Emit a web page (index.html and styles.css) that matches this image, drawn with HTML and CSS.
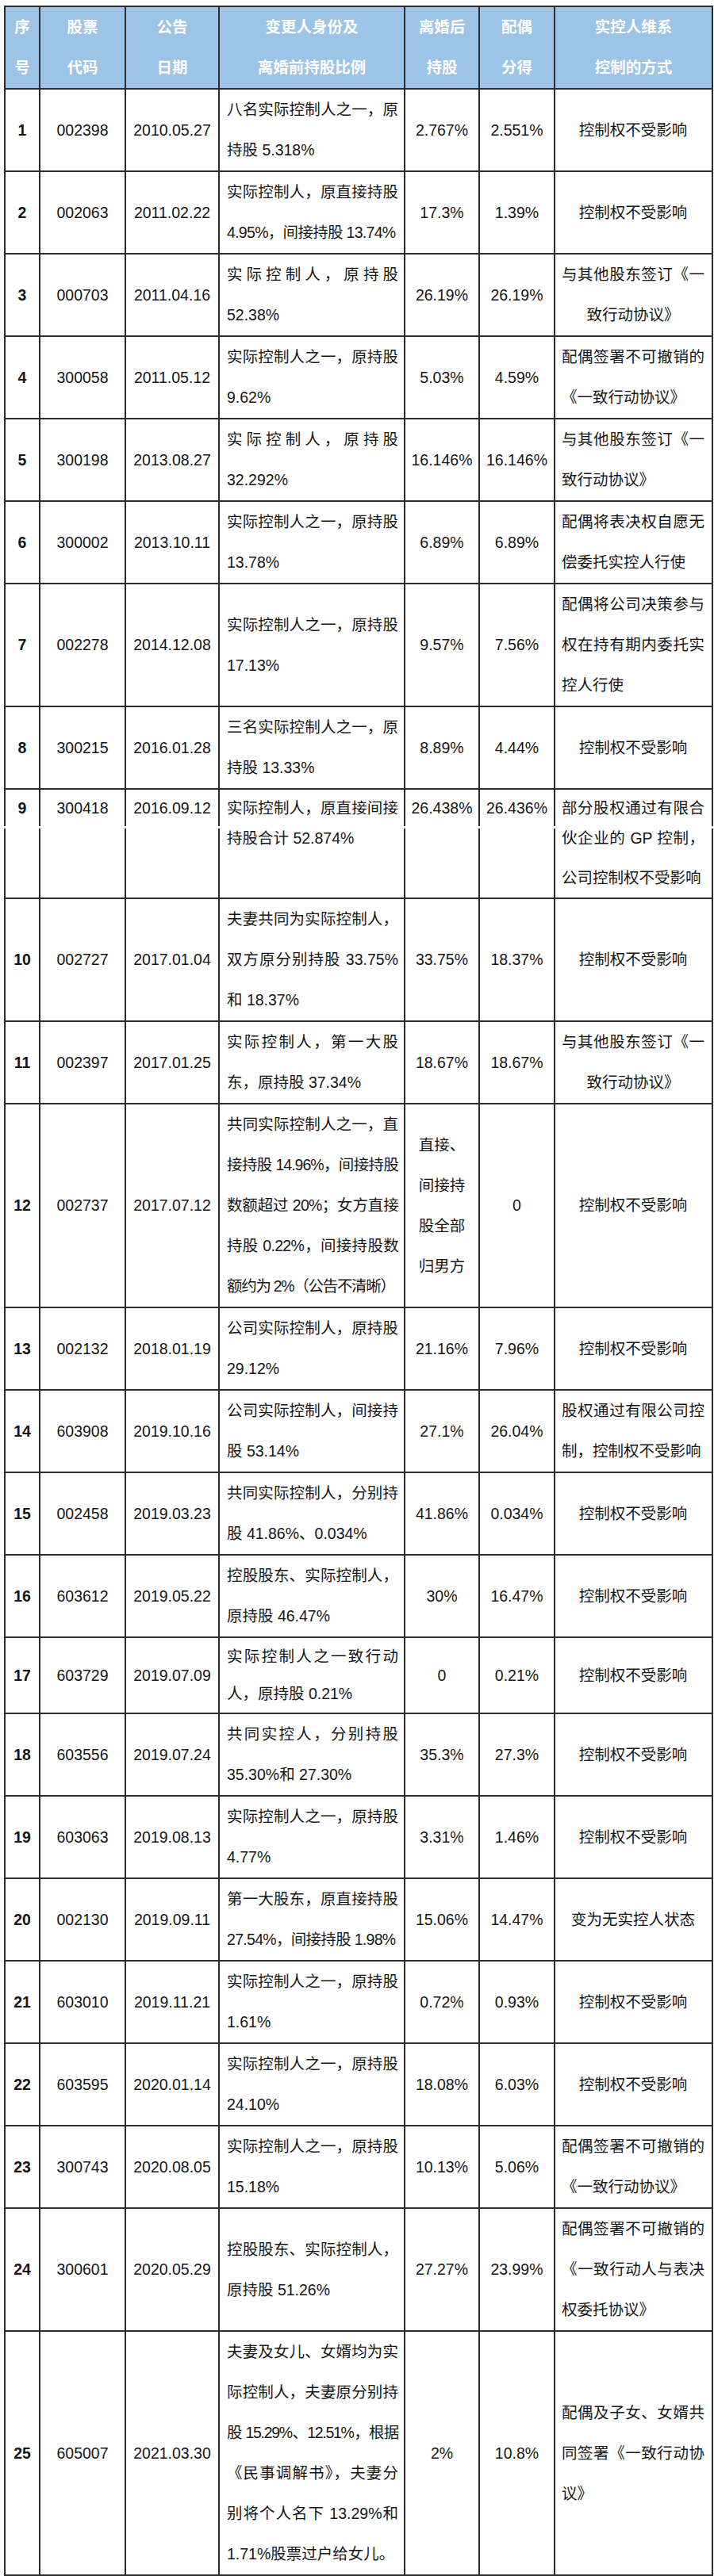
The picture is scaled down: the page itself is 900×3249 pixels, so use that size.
FILE: index.html
```html
<!DOCTYPE html>
<html lang="zh-CN">
<head>
<meta charset="utf-8">
<title>离婚案例表</title>
<link rel="stylesheet" href="styles.css">
</head>
<body>
<table class="tbl">
<colgroup>
<col class="w1"><col class="w2"><col class="w3"><col class="w4"><col class="w5"><col class="w6"><col class="w7">
</colgroup>
<thead>
<tr>
<th>序<br>号</th><th>股票<br>代码</th><th>公告<br>日期</th><th>变更人身份及<br>离婚前持股比例</th><th>离婚后<br>持股</th><th>配偶<br>分得</th><th>实控人维系<br>控制的方式</th>
</tr>
</thead>
<tbody>
<tr><td class="num">1</td><td>002398</td><td>2010.05.27</td><td class="desc"><span class="l">八名实际控制人之一，原</span>持股 5.318%</td><td class="val">2.767%</td><td class="val">2.551%</td><td class="ctl">控制权不受影响</td></tr>
<tr><td class="num">2</td><td>002063</td><td>2011.02.22</td><td class="desc"><span class="l">实际控制人，原直接持股</span><span class="e t1">4.95%，间接持股 13.74%</span></td><td class="val">17.3%</td><td class="val">1.39%</td><td class="ctl">控制权不受影响</td></tr>
<tr><td class="num">3</td><td>000703</td><td>2011.04.16</td><td class="desc"><span class="l">实际控制人，原持股</span>52.38%</td><td class="val">26.19%</td><td class="val">26.19%</td><td class="ctl"><span class="l">与其他股东签订《一</span>致行动协议》</td></tr>
<tr><td class="num">4</td><td>300058</td><td>2011.05.12</td><td class="desc"><span class="l">实际控制人之一，原持股</span>9.62%</td><td class="val">5.03%</td><td class="val">4.59%</td><td class="ctl lft"><span class="l">配偶签署不可撤销的</span>《一致行动协议》</td></tr>
<tr><td class="num">5</td><td>300198</td><td>2013.08.27</td><td class="desc"><span class="l">实际控制人，原持股</span>32.292%</td><td class="val">16.146%</td><td class="val">16.146%</td><td class="ctl lft"><span class="l">与其他股东签订《一</span>致行动协议》</td></tr>
<tr><td class="num">6</td><td>300002</td><td>2013.10.11</td><td class="desc"><span class="l">实际控制人之一，原持股</span>13.78%</td><td class="val">6.89%</td><td class="val">6.89%</td><td class="ctl lft"><span class="l">配偶将表决权自愿无</span>偿委托实控人行使</td></tr>
<tr><td class="num">7</td><td>002278</td><td>2014.12.08</td><td class="desc"><span class="l">实际控制人之一，原持股</span>17.13%</td><td class="val">9.57%</td><td class="val">7.56%</td><td class="ctl lft"><span class="l">配偶将公司决策参与</span><span class="l">权在持有期内委托实</span>控人行使</td></tr>
<tr><td class="num">8</td><td>300215</td><td>2016.01.28</td><td class="desc"><span class="l">三名实际控制人之一，原</span>持股 13.33%</td><td class="val">8.89%</td><td class="val">4.44%</td><td class="ctl">控制权不受影响</td></tr>
<tr class="r9a"><td class="num">9</td><td>300418</td><td>2016.09.12</td><td class="desc"><span class="l">实际控制人，原直接间接</span></td><td class="val">26.438%</td><td class="val">26.436%</td><td class="ctl lft"><span class="l">部分股权通过有限合</span></td></tr>
<tr class="gap"><td colspan="7"></td></tr>
<tr class="r9b"><td></td><td></td><td></td><td class="desc"><div class="up">持股合计 52.874%</div></td><td></td><td></td><td class="ctl lft"><div class="up"><span class="l">伙企业的 GP 控制，</span>公司控制权不受影响</div></td></tr>
<tr><td class="num">10</td><td>002727</td><td>2017.01.04</td><td class="desc"><span class="l">夫妻共同为实际控制人，</span><span class="l">双方原分别持股 33.75%</span>和 18.37%</td><td class="val">33.75%</td><td class="val">18.37%</td><td class="ctl">控制权不受影响</td></tr>
<tr><td class="num">11</td><td>002397</td><td>2017.01.25</td><td class="desc"><span class="l">实际控制人，第一大股</span>东，原持股 37.34%</td><td class="val">18.67%</td><td class="val">18.67%</td><td class="ctl"><span class="l">与其他股东签订《一</span>致行动协议》</td></tr>
<tr><td class="num">12</td><td>002737</td><td>2017.07.12</td><td class="desc"><span class="l">共同实际控制人之一，直</span><span class="l t2">接持股 14.96%，间接持股</span><span class="l t1">数额超过 20%；女方直接</span><span class="l t1">持股 0.22%，间接持股数</span><span class="e t3">额约为 2%（公告不清晰）</span></td><td class="val">直接、<br>间接持<br>股全部<br>归男方</td><td class="val">0</td><td class="ctl">控制权不受影响</td></tr>
<tr><td class="num">13</td><td>002132</td><td>2018.01.19</td><td class="desc"><span class="l">公司实际控制人，原持股</span>29.12%</td><td class="val">21.16%</td><td class="val">7.96%</td><td class="ctl">控制权不受影响</td></tr>
<tr><td class="num">14</td><td>603908</td><td>2019.10.16</td><td class="desc"><span class="l">公司实际控制人，间接持</span>股 53.14%</td><td class="val">27.1%</td><td class="val">26.04%</td><td class="ctl lft"><span class="l">股权通过有限公司控</span>制，控制权不受影响</td></tr>
<tr><td class="num">15</td><td>002458</td><td>2019.03.23</td><td class="desc"><span class="l">共同实际控制人，分别持</span>股 41.86%、0.034%</td><td class="val">41.86%</td><td class="val">0.034%</td><td class="ctl">控制权不受影响</td></tr>
<tr><td class="num">16</td><td>603612</td><td>2019.05.22</td><td class="desc"><span class="l">控股股东、实际控制人，</span>原持股 46.47%</td><td class="val">30%</td><td class="val">16.47%</td><td class="ctl">控制权不受影响</td></tr>
<tr class="r17"><td class="num">17</td><td>603729</td><td>2019.07.09</td><td class="desc"><span class="l">实际控制人之一致行动</span>人，原持股 0.21%</td><td class="val">0</td><td class="val">0.21%</td><td class="ctl">控制权不受影响</td></tr>
<tr><td class="num">18</td><td>603556</td><td>2019.07.24</td><td class="desc"><span class="l">共同实控人，分别持股</span>35.30%和 27.30%</td><td class="val">35.3%</td><td class="val">27.3%</td><td class="ctl">控制权不受影响</td></tr>
<tr><td class="num">19</td><td>603063</td><td>2019.08.13</td><td class="desc"><span class="l">实际控制人之一，原持股</span>4.77%</td><td class="val">3.31%</td><td class="val">1.46%</td><td class="ctl">控制权不受影响</td></tr>
<tr><td class="num">20</td><td>002130</td><td>2019.09.11</td><td class="desc"><span class="l">第一大股东，原直接持股</span><span class="e t1">27.54%，间接持股 1.98%</span></td><td class="val">15.06%</td><td class="val">14.47%</td><td class="ctl">变为无实控人状态</td></tr>
<tr><td class="num">21</td><td>603010</td><td>2019.11.21</td><td class="desc"><span class="l">实际控制人之一，原持股</span>1.61%</td><td class="val">0.72%</td><td class="val">0.93%</td><td class="ctl">控制权不受影响</td></tr>
<tr><td class="num">22</td><td>603595</td><td>2020.01.14</td><td class="desc"><span class="l">实际控制人之一，原持股</span>24.10%</td><td class="val">18.08%</td><td class="val">6.03%</td><td class="ctl">控制权不受影响</td></tr>
<tr><td class="num">23</td><td>300743</td><td>2020.08.05</td><td class="desc"><span class="l">实际控制人之一，原持股</span>15.18%</td><td class="val">10.13%</td><td class="val">5.06%</td><td class="ctl lft"><span class="l">配偶签署不可撤销的</span>《一致行动协议》</td></tr>
<tr><td class="num">24</td><td>300601</td><td>2020.05.29</td><td class="desc"><span class="l">控股股东、实际控制人，</span>原持股 51.26%</td><td class="val">27.27%</td><td class="val">23.99%</td><td class="ctl lft"><span class="l">配偶签署不可撤销的</span><span class="l">《一致行动人与表决</span>权委托协议》</td></tr>
<tr><td class="num">25</td><td>605007</td><td>2021.03.30</td><td class="desc"><span class="l">夫妻及女儿、女婿均为实</span><span class="l">际控制人，夫妻原分别持</span><span class="l t3">股 15.29%、12.51%，根据</span><span class="l">《民事调解书》，夫妻分</span><span class="l">别将个人名下 13.29%和</span>1.71%股票过户给女儿。</td><td class="val">2%</td><td class="val">10.8%</td><td class="ctl lft"><span class="l">配偶及子女、女婿共</span><span class="l">同签署《一致行动协</span>议》</td></tr>
</tbody>
</table>
</body>
</html>
```

FILE: styles.css
```css
html, body {
  margin: 0;
  padding: 0;
  background: #ffffff;
}

body {
  font-family: "Liberation Sans", "Noto Sans CJK SC", sans-serif;
  color: #151515;
}

.tbl {
  border-collapse: collapse;
  table-layout: fixed;
  width: 894px;
  margin: 7px 0 0 5px;
  font-size: 19.5px;
  line-height: 51px;
}

.w1 { width: 44px; }
.w2 { width: 108px; }
.w3 { width: 118px; }
.w4 { width: 234px; }
.w5 { width: 94px; }
.w6 { width: 95px; }
.w7 { width: 199px; }

.tbl th,
.tbl td {
  border: 2px solid #2c2c2c;
  padding: 0;
  text-align: center;
  vertical-align: middle;
  font-weight: 400;
}

.tbl th {
  background: #9dc3e6;
  color: #ffffff;
  font-weight: 700;
}

.num {
  font-weight: 700 !important;
}

.desc {
  text-align: left !important;
  padding: 0 7px 0 9px !important;
}

.val {
  padding: 0 4px !important;
}

.ctl {
  padding: 0 9px 0 8px !important;
}

.lft {
  text-align: left !important;
}

.l {
  display: block;
  text-align: justify;
  text-align-last: justify;
}

.e {
  white-space: nowrap;
}

.t1 { letter-spacing: -0.7px; }
.t2 { letter-spacing: -1px; }
.t3 { letter-spacing: -1.3px; }

.r9a td {
  border-bottom: none;
  line-height: 46px;
}

.gap td {
  border: none;
  height: 3px;
  padding: 0;
  line-height: 0;
  font-size: 0;
}

.r9b td {
  border-top: none;
  vertical-align: top;
  line-height: 50px;
}

.up {
  margin-top: -13px;
}

.r17 td {
  line-height: 47px;
}
```
